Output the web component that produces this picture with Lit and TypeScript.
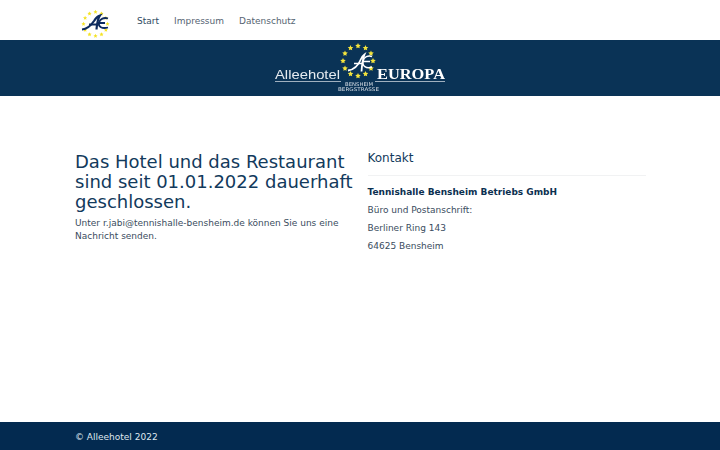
import { LitElement, html, css, svg } from "lit";
import { customElement } from "lit/decorators.js";

const star = (x: number, y: number, r: number, fill: string) => {
  const pts: string[] = [];
  for (let i = 0; i < 10; i++) {
    const a = -Math.PI / 2 + (i * Math.PI) / 5;
    const rr = i % 2 ? r * 0.48 : r;
    pts.push(`${(x + rr * Math.cos(a)).toFixed(2)},${(y + rr * Math.sin(a)).toFixed(2)}`);
  }
  return svg`<polygon points=${pts.join(" ")} fill=${fill}></polygon>`;
};

const ring = (cx: number, cy: number, R: number, r: number, fill: string) =>
  Array.from({ length: 12 }, (_, i) => {
    const a = (i * Math.PI) / 6;
    return star(cx + R * Math.sin(a), cy - R * Math.cos(a), r, fill);
  });

@customElement("app-root")
export class AppRoot extends LitElement {
  static styles = css`
    :host {
      display: flex;
      flex-direction: column;
      min-height: 450px;
      font-family: "DejaVu Sans", sans-serif;
      color: #3a4c5e;
      font-size: 9px;
      line-height: 1.5;
      background: #fff;
    }
    .nav {
      height: 40px;
      display: flex;
      align-items: center;
      padding: 8px 0 0 80px;
      box-sizing: border-box;
    }
    .brand { width: 32px; height: 32px; display: block; margin-right: 25px; filter: blur(0.3px); }
    .links { display: flex; gap: 15px; font-size: 9px; padding-bottom: 4px; }
    .links a { color: #566472; text-decoration: none; }
    .links a.active { color: #2f4a62; }
    .banner {
      height: 56px;
      background: #0a3356;
      display: flex;
      justify-content: center;
      align-items: center;
    }
    .banner svg { display: block; width: 180px; height: 56px; filter: blur(0.25px); }
    .main {
      flex: 1;
      display: grid;
      grid-template-columns: 292.5px 278px;
      padding: 55px 0 0 75px;
      align-content: start;
    }
    .left { padding-top: 1px; }
    h1 {
      margin: 0;
      font-size: 18px;
      font-weight: 400;
      line-height: 20px;
      color: #123a5c;
    }
    .left p { margin: 0; padding-top: 5px; line-height: 13px; width: 275px; }
    h2 {
      margin: 0;
      font-size: 12px;
      font-weight: 400;
      line-height: 14px;
      color: #123a5c;
      padding-bottom: 10px;
      border-bottom: 1px solid #f1f2f3;
      margin-bottom: 7px;
    }
    .right p { margin: 0; line-height: 18px; }
    .right p.name { font-weight: 700; color: #0b3050; }
    .foot {
      height: 28px;
      box-sizing: border-box;
      background: #032a50;
      color: #dfe6ee;
      display: flex;
      align-items: center;
      padding: 4px 0 0 75px;
    }
  `;

  render() {
    return html`
      <nav class="nav">
        <svg class="brand" viewBox="0 0 32 32">
          ${ring(15.5, 16, 12, 2.2, "#f5e326")}
          <path d="M2 21.500C8 21 11 17.500 14 13c1.500-2.500 3-4.500 6-5.500-2 3-3 7-3.500 14" fill="none" stroke="#0d2a5e" stroke-width="2.200"></path>
          <path d="M9 16.500h10M28 10.500c-4-1.500-8 .500-9 4-1 4.500 3 6.500 9 5M18 15h7" fill="none" stroke="#0d2a5e" stroke-width="1.800"></path>
        </svg>
        <div class="links">
          <a class="active" href="#">Start</a>
          <a href="#">Impressum</a>
          <a href="#">Datenschutz</a>
        </div>
      </nav>
      <div class="banner">
        <svg viewBox="0 0 180 56">
          ${ring(88, 21, 15, 2.900, "#f4e43c")}
          <path d="M78 30.500C85 29.500 89 24 91 19c.800-2 1.500-3 3.500-4.500-1.500 4-2.500 9-3 17" fill="none" stroke="#fff" stroke-width="1.800"></path>
          <path d="M84 23.500h8M102 16.500c-4-1.500-8 .500-9 4.500-1 5 3 8 9 6M92 21.500h8" fill="none" stroke="#fff" stroke-width="1.500"></path>
          <text x="5" y="39" font-family="Liberation Sans, sans-serif" font-size="12.500" fill="#e6ebf0" textLength="65" lengthAdjust="spacingAndGlyphs">Alleehotel</text>
          <text x="107" y="39" font-family="Liberation Serif, serif" font-size="14.500" font-weight="700" fill="#fff" textLength="68" lengthAdjust="spacingAndGlyphs">EUROPA</text>
          <path d="M5 41.500H71M105 41.500H175" stroke="#c6d0da" stroke-width="0.800"></path>
          <text x="89" y="45.500" text-anchor="middle" font-family="DejaVu Sans, sans-serif" font-size="5" fill="#d7dee6" textLength="28" lengthAdjust="spacingAndGlyphs">BENSHEIM</text>
          <text x="88.500" y="50.500" text-anchor="middle" font-family="DejaVu Sans, sans-serif" font-size="5" fill="#d7dee6" textLength="41" lengthAdjust="spacingAndGlyphs">BERGSTRASSE</text>
        </svg>
      </div>
      <main class="main">
        <section class="left">
          <h1>Das Hotel und das Restaurant sind seit 01.01.2022 dauerhaft geschlossen.</h1>
          <p>Unter r.jabi@tennishalle-bensheim.de können Sie uns eine Nachricht senden.</p>
        </section>
        <section class="right">
          <h2>Kontakt</h2>
          <p class="name">Tennishalle Bensheim Betriebs GmbH</p>
          <p>Büro und Postanschrift:</p>
          <p>Berliner Ring 143</p>
          <p>64625 Bensheim</p>
        </section>
      </main>
      <footer class="foot">© Alleehotel 2022</footer>
    `;
  }
}
